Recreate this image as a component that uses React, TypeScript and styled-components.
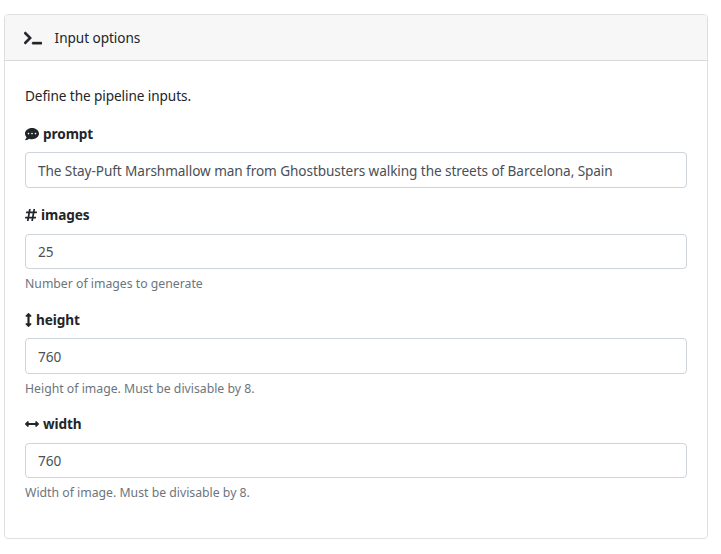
import React from 'react';
import styled, { createGlobalStyle } from 'styled-components';
import { FaTerminal, FaCommentDots, FaHashtag, FaArrowsAltV, FaArrowsAltH } from 'react-icons/fa';

const GlobalStyle = createGlobalStyle`
  *, *::before, *::after { box-sizing: border-box; }
  body {
    margin: 0;
    background: #fff;
    color: #212529;
    font-family: "Noto Sans", "Open Sans", sans-serif;
    font-size: 13.6px;
    letter-spacing: -0.08px;
    line-height: 21px;
  }
`;

const Card = styled.section`
  display: flex;
  flex-direction: column;
  width: 704px;
  height: 525px;
  margin: 14px 0 0 4px;
  border: 1px solid #dfdfdf;
  border-radius: 4px;
`;

const CardHeader = styled.header`
  display: flex;
  align-items: center;
  gap: 12px;
  height: 46px;
  padding: 0 19px;
  background: #f7f7f7;
  border-bottom: 1px solid #d8d8d8;
  border-radius: 3px 3px 0 0;

  svg { stroke: currentColor; stroke-width: 14px; }
`;

const Title = styled.span`
  white-space: nowrap;
  letter-spacing: -0.05px;
  padding-left: 0.6px;
`;

const CardBody = styled.div`
  display: flex;
  flex-direction: column;
  padding: 24px 20px 0;
`;

const Intro = styled.p`
  margin: 0 0 17px;
`;

const Field = styled.div<{ $height: number }>`
  height: ${({ $height }) => $height}px;
`;

const Label = styled.label<{ $iconWidth: number }>`
  display: flex;
  align-items: center;
  gap: 4px;
  height: 21px;
  margin-bottom: 8px;
  font-weight: 700;

  svg {
    flex: none;
    width: ${({ $iconWidth }) => $iconWidth}px;
    height: 14px;
  }
`;

const Input = styled.input<{ $compact?: boolean }>`
  display: block;
  width: 662px;
  height: ${({ $compact }) => ($compact ? 35 : 36)}px;
  margin-top: ${({ $compact }) => ($compact ? 9 : 8)}px;
  padding: 0 12px;
  border: 1px solid #ced4da;
  border-radius: 4px;
  background: #fff;
  color: #495057;
  font: inherit;
  letter-spacing: inherit;
  outline: none;
`;

const Help = styled.small`
  display: block;
  margin-top: 5px;
  color: #6c757d;
  font-size: 12.25px;
  letter-spacing: 0;
  line-height: 19px;
`;

export default function App() {
  return (
    <>
      <GlobalStyle />
      <Card>
        <CardHeader>
          <FaTerminal size={18} />
          <Title>Input options</Title>
        </CardHeader>
        <CardBody>
          <Intro>Define the pipeline inputs.</Intro>
          <Field $height={81}>
            <Label $iconWidth={14}><FaCommentDots />prompt</Label>
            <Input defaultValue="The Stay-Puft Marshmallow man from Ghostbusters walking the streets of Barcelona, Spain" />
          </Field>
          <Field $height={105}>
            <Label $iconWidth={12}><FaHashtag />images</Label>
            <Input $compact defaultValue="25" />
            <Help>Number of images to generate</Help>
          </Field>
          <Field $height={104}>
            <Label $iconWidth={7}><FaArrowsAltV />height</Label>
            <Input defaultValue="760" />
            <Help>Height of image. Must be divisable by 8.</Help>
          </Field>
          <Field $height={105}>
            <Label $iconWidth={14}><FaArrowsAltH />width</Label>
            <Input $compact defaultValue="760" />
            <Help>Width of image. Must be divisable by 8.</Help>
          </Field>
        </CardBody>
      </Card>
    </>
  );
}
